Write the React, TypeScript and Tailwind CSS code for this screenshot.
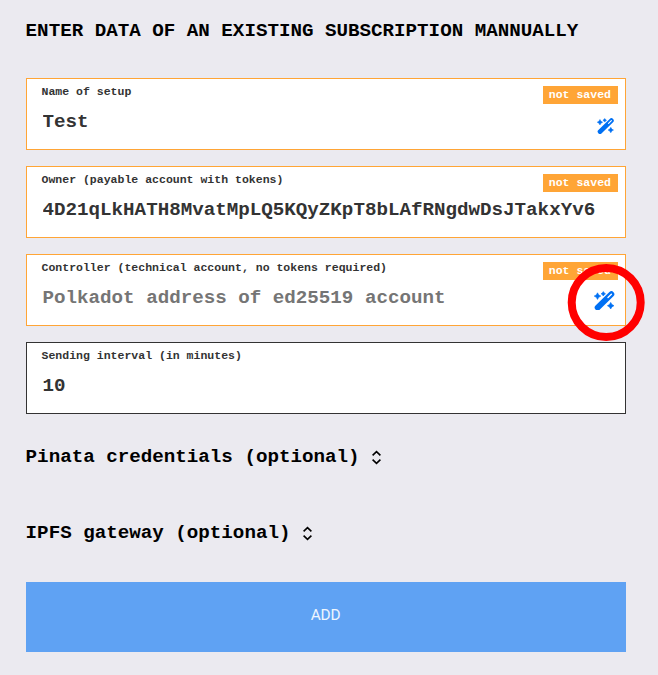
type FieldProps = {
  label: string;
  value?: string;
  placeholder?: string;
  unsaved?: boolean;
  wand?: string;
};

function Wand({ className }: { className: string }) {
  return (
    <svg className={className} viewBox="0 0 20.5 19.5" fill="#0070f3">
      <path d="M3.6 16.6 17.4 3.2" stroke="#0070f3" strokeWidth="5.8" strokeLinecap="round" />
      <path d="M14 6.5 17.4 3.2" stroke="white" strokeWidth="1.4" strokeLinecap="round" />
      <g stroke="#0070f3" strokeWidth="0.6" strokeLinejoin="round">
        <path d="M3.5 1.8 4.7 3.9 6.8 5.1 4.7 6.3 3.5 8.4 2.3 6.3 0.2 5.1 2.3 3.9Z" />
        <path d="M9.3 0.6 10.2 1.9 11.5 2.8 10.2 3.7 9.3 5 8.4 3.7 7.1 2.8 8.4 1.9Z" />
        <path d="M16.7 11.4 17.9 13.5 20 14.7 17.9 15.9 16.7 18 15.5 15.9 13.4 14.7 15.5 13.5Z" />
      </g>
    </svg>
  );
}

function Field({ label, value, placeholder, unsaved, wand }: FieldProps) {
  return (
    <div
      className={`relative flex h-[72px] flex-col border bg-white pl-[14.5px] text-[#333333] ${
        unsaved ? "border-[#ffa536]" : "border-[#333333]"
      }`}
    >
      <label className="mt-[5px] h-4 text-[11.52px] leading-4">{label}</label>
      <input
        className="mt-[10px] ml-px h-6 w-[570px] bg-transparent text-[19.2px] leading-6 outline-none placeholder:text-[#757575]"
        defaultValue={value}
        placeholder={placeholder}
      />
      {unsaved && (
        <span className="absolute top-[7px] right-[7px] h-[18px] w-[75px] bg-[#ffa536] pl-[5.8px] text-[11.52px] leading-[18px] text-white">
          not saved
        </span>
      )}
      {wand && <Wand className={`absolute ${wand}`} />}
    </div>
  );
}

function Section({ title }: { title: string }) {
  return (
    <div className="flex h-6 items-center text-[19.2px] leading-6">
      <span>{title}</span>
      <svg className="mt-px ml-[11.5px] h-[15px] w-[11px]" viewBox="0 0 11 15" fill="none" stroke="black" strokeWidth="1.6">
        <path d="M1.6 5.4 5.5 1.7 9.4 5.4M1.6 9.6 5.5 13.3 9.4 9.6" />
      </svg>
    </div>
  );
}

export default function App() {
  return (
    <main className="relative h-[675px] w-[658px] overflow-hidden bg-[#ebeaf0] pt-[19px] pr-8 pl-[26px] font-['Liberation_Mono',monospace] font-bold text-black">
      <h1 className="-ml-[0.4px] h-6 text-[19.2px] leading-6 whitespace-nowrap">
        ENTER DATA OF AN EXISTING SUBSCRIPTION MANNUALLY
      </h1>
      <div className="mt-[35px] flex flex-col gap-4">
        <Field label="Name of setup" value="Test" unsaved wand="right-[11px] top-[39px] h-4 w-[17px]" />
        <Field
          label="Owner (payable account with tokens)"
          value="4D21qLkHATH8MvatMpLQ5KQyZKpT8bLAfRNgdwDsJTakxYv6"
          unsaved
        />
        <Field
          label="Controller (technical account, no tokens required)"
          placeholder="Polkadot address of ed25519 account"
          unsaved
          wand="right-[10.5px] top-[35.6px] h-[19.5px] w-[20.5px]"
        />
        <Field label="Sending interval (in minutes)" value="10" />
      </div>
      <div className="mt-[31px] -ml-[0.4px] flex flex-col gap-[52px]">
        <Section title="Pinata credentials (optional)" />
        <Section title="IPFS gateway (optional)" />
      </div>
      <button className="mt-[37px] flex h-[70px] w-full items-center justify-center bg-[#5fa2f3] pr-[1px] pb-[3px] font-[Roboto,sans-serif] text-[15.36px] font-normal tracking-[-0.2px] text-white/90">
        ADD
      </button>
      <svg className="absolute top-[263px] left-[567px] h-[79px] w-[79px]" viewBox="0 0 79 79">
        <circle cx="39.2" cy="39.5" r="34.5" fill="none" stroke="#ff0000" strokeWidth="8" />
      </svg>
    </main>
  );
}
